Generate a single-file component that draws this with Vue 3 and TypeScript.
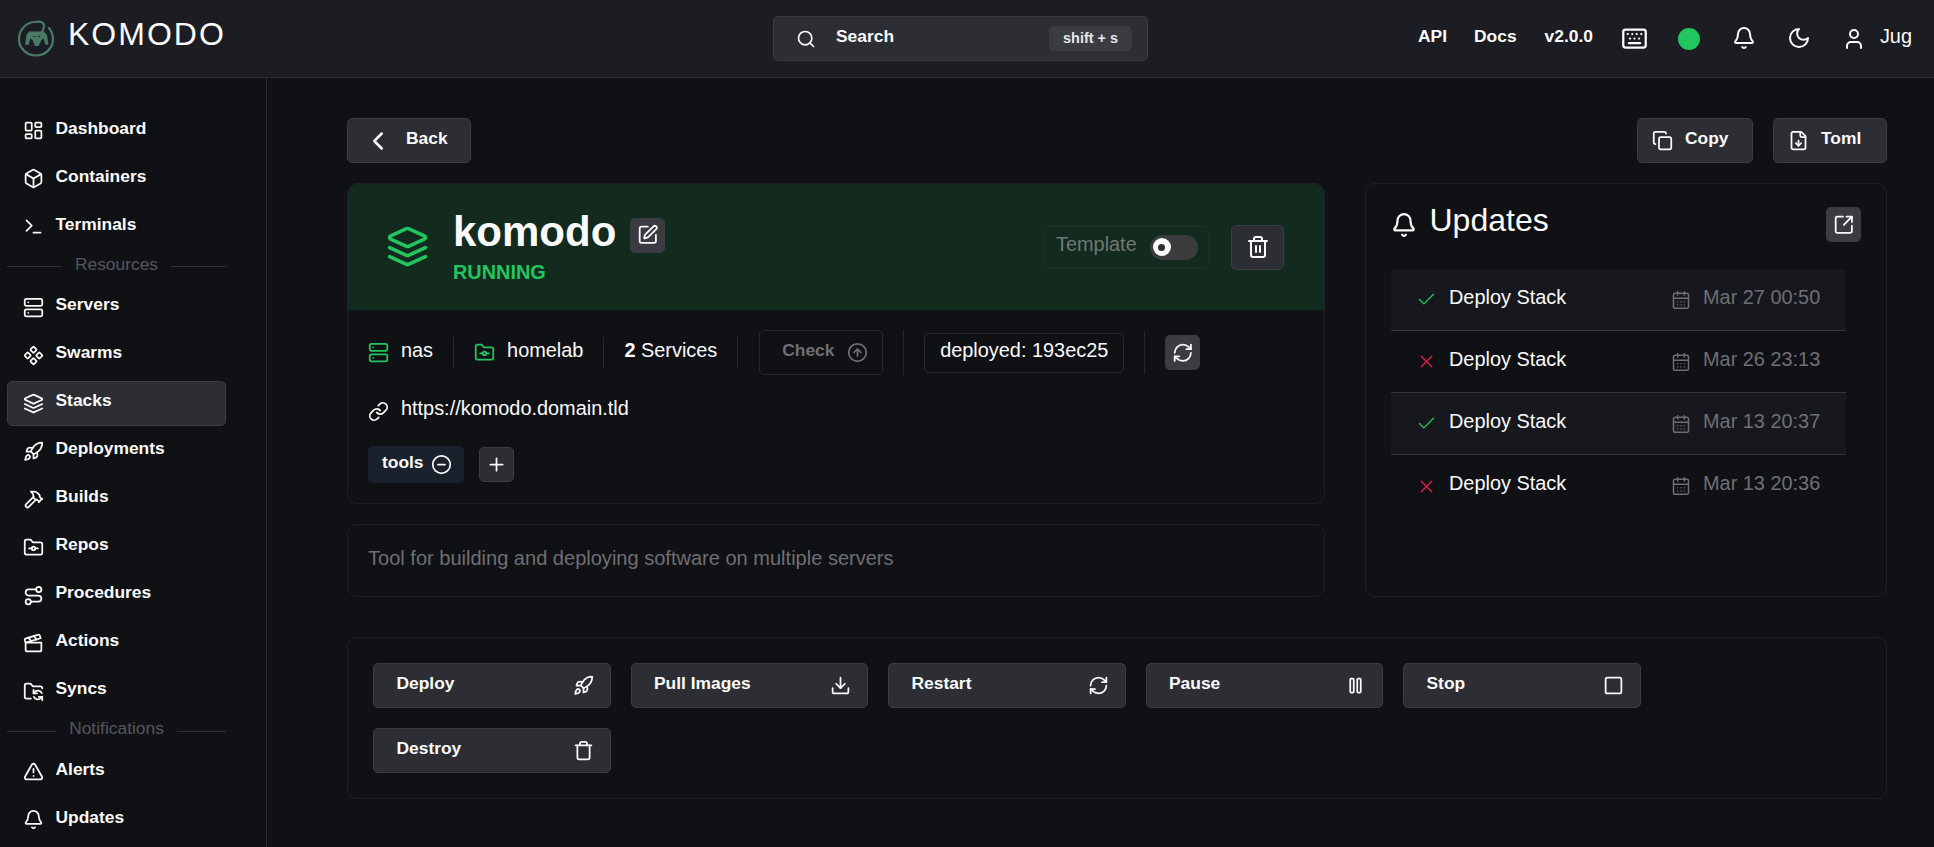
<script setup lang="ts">
const icons: Record<string, string> = {
  dashboard: '<rect x="3" y="3" width="7" height="9" rx="1"/><rect x="14" y="3" width="7" height="5" rx="1"/><rect x="14" y="12" width="7" height="9" rx="1"/><rect x="3" y="16" width="7" height="5" rx="1"/>',
  box: '<path d="M21 8a2 2 0 0 0-1-1.73l-7-4a2 2 0 0 0-2 0l-7 4A2 2 0 0 0 3 8v8a2 2 0 0 0 1 1.73l7 4a2 2 0 0 0 2 0l7-4A2 2 0 0 0 21 16Z"/><path d="m3.3 7 8.7 5 8.7-5"/><path d="M12 22V12"/>',
  terminal: '<polyline points="4 17 10 11 4 5"/><line x1="12" x2="20" y1="19" y2="19"/>',
  server: '<rect width="20" height="8" x="2" y="2" rx="2"/><rect width="20" height="8" x="2" y="14" rx="2"/><line x1="6" x2="6.01" y1="6" y2="6"/><line x1="6" x2="6.01" y1="18" y2="18"/>',
  swarm: '<path d="M15.536 11.293a1 1 0 0 0 0 1.414l2.376 2.377a1 1 0 0 0 1.414 0l2.377-2.377a1 1 0 0 0 0-1.414l-2.377-2.377a1 1 0 0 0-1.414 0z"/><path d="M2.297 11.293a1 1 0 0 0 0 1.414l2.377 2.377a1 1 0 0 0 1.414 0l2.377-2.377a1 1 0 0 0 0-1.414L6.088 8.916a1 1 0 0 0-1.414 0z"/><path d="M8.916 17.912a1 1 0 0 0 0 1.415l2.377 2.376a1 1 0 0 0 1.414 0l2.377-2.376a1 1 0 0 0 0-1.415l-2.377-2.376a1 1 0 0 0-1.414 0z"/><path d="M8.916 4.674a1 1 0 0 0 0 1.414l2.377 2.376a1 1 0 0 0 1.414 0l2.377-2.376a1 1 0 0 0 0-1.414l-2.377-2.377a1 1 0 0 0-1.414 0z"/>',
  layers: '<path d="m12.83 2.18a2 2 0 0 0-1.66 0L2.6 6.08a1 1 0 0 0 0 1.83l8.58 3.91a2 2 0 0 0 1.66 0l8.58-3.9a1 1 0 0 0 0-1.83Z"/><path d="m22 17.65-9.17 4.16a2 2 0 0 1-1.66 0L2 17.65"/><path d="m22 12.65-9.17 4.16a2 2 0 0 1-1.66 0L2 12.65"/>',
  rocket: '<path d="M4.5 16.5c-1.5 1.26-2 5-2 5s3.74-.5 5-2c.71-.84.7-2.13-.09-2.91a2.18 2.18 0 0 0-2.91-.09z"/><path d="m12 15-3-3a22 22 0 0 1 2-3.95A12.88 12.88 0 0 1 22 2c0 2.72-.78 7.5-6 11a22.35 22.35 0 0 1-4 2z"/><path d="M9 12H4s.55-3.03 2-4c1.62-1.08 5 0 5 0"/><path d="M12 15v5s3.03-.55 4-2c1.08-1.62 0-5 0-5"/>',
  hammer: '<path d="m15 12-8.373 8.373a1 1 0 1 1-3-3L12 9"/><path d="m18 15 4-4"/><path d="m21.5 11.5-1.914-1.914A2 2 0 0 1 19 8.172V7l-2.26-2.26a6 6 0 0 0-4.202-1.756L9 2.96l.92.82A6.18 6.18 0 0 1 12 8.4V10l2 2h1.172a2 2 0 0 1 1.414.586L18.5 14.5"/>',
  folderGit: '<path d="M20 20a2 2 0 0 0 2-2V8a2 2 0 0 0-2-2h-7.9a2 2 0 0 1-1.69-.9L9.6 3.9A2 2 0 0 0 7.93 3H4a2 2 0 0 0-2 2v13a2 2 0 0 0 2 2Z"/><circle cx="12" cy="13" r="2"/><path d="M14 13h3"/><path d="M7 13h3"/>',
  route: '<circle cx="6" cy="19" r="3"/><path d="M9 19h8.5a3.5 3.5 0 0 0 0-7h-11a3.5 3.5 0 0 1 0-7H15"/><circle cx="18" cy="5" r="3"/>',
  clapper: '<path d="M20.2 6 3 11l-.9-2.4c-.3-1.1.3-2.2 1.3-2.5l13.5-4c1.1-.3 2.2.3 2.5 1.3Z"/><path d="m6.2 5.3 3.1 3.9"/><path d="m12.4 3.4 3.1 4"/><path d="M3 11h18v8a2 2 0 0 1-2 2H5a2 2 0 0 1-2-2Z"/>',
  folderSync: '<path d="M9 20H4a2 2 0 0 1-2-2V5a2 2 0 0 1 2-2h3.9a2 2 0 0 1 1.69.9l.81 1.2a2 2 0 0 0 1.67.9H20a2 2 0 0 1 2 2v.5"/><path d="M12 10v4h4"/><path d="m12 14 1.535-1.605a5 5 0 0 1 8 1.5"/><path d="M22 22v-4h-4"/><path d="m22 18-1.535 1.605a5 5 0 0 1-8-1.5"/>',
  alert: '<path d="m21.73 18-8-14a2 2 0 0 0-3.48 0l-8 14A2 2 0 0 0 4 21h16a2 2 0 0 0 1.73-3"/><path d="M12 9v4"/><path d="M12 17h.01"/>',
  bell: '<path d="M10.268 21a2 2 0 0 0 3.464 0"/><path d="M3.262 15.326A1 1 0 0 0 4 17h16a1 1 0 0 0 .74-1.673C19.41 13.956 18 12.499 18 8A6 6 0 0 0 6 8c0 4.499-1.411 5.956-2.738 7.326"/>',
  search: '<circle cx="11" cy="11" r="8"/><path d="m21 21-4.3-4.3"/>',
  keyboard: '<path d="M10 8h.01"/><path d="M12 12h.01"/><path d="M14 8h.01"/><path d="M16 12h.01"/><path d="M18 8h.01"/><path d="M6 8h.01"/><path d="M7 16h10"/><path d="M8 12h.01"/><rect width="20" height="16" x="2" y="4" rx="2"/>',
  moon: '<path d="M12 3a6 6 0 0 0 9 9 9 9 0 1 1-9-9Z"/>',
  user: '<path d="M19 21v-2a4 4 0 0 0-4-4H9a4 4 0 0 0-4 4v2"/><circle cx="12" cy="7" r="4"/>',
  chevron: '<path d="m15 18-6-6 6-6"/>',
  copy: '<rect width="14" height="14" x="8" y="8" rx="2"/><path d="M4 16c-1.1 0-2-.9-2-2V4c0-1.1.9-2 2-2h10c1.1 0 2 .9 2 2"/>',
  fileDown: '<path d="M15 2H6a2 2 0 0 0-2 2v16a2 2 0 0 0 2 2h12a2 2 0 0 0 2-2V7Z"/><path d="M14 2v4a2 2 0 0 0 2 2h4"/><path d="M12 18v-6"/><path d="m9 15 3 3 3-3"/>',
  pen: '<path d="M12 3H5a2 2 0 0 0-2 2v14a2 2 0 0 0 2 2h14a2 2 0 0 0 2-2v-7"/><path d="M18.375 2.625a1 1 0 0 1 3 3l-9.013 9.014a2 2 0 0 1-.853.505l-2.873.84a.5.5 0 0 1-.62-.62l.84-2.873a2 2 0 0 1 .506-.852z"/>',
  trash2: '<path d="M3 6h18"/><path d="M19 6v14c0 1-1 2-2 2H7c-1 0-2-1-2-2V6"/><path d="M8 6V4c0-1 1-2 2-2h4c1 0 2 1 2 2v2"/><line x1="10" x2="10" y1="11" y2="17"/><line x1="14" x2="14" y1="11" y2="17"/>',
  trash: '<path d="M3 6h18"/><path d="M19 6v14c0 1-1 2-2 2H7c-1 0-2-1-2-2V6"/><path d="M8 6V4c0-1 1-2 2-2h4c1 0 2 1 2 2v2"/>',
  arrowUp: '<circle cx="12" cy="12" r="10"/><path d="m16 12-4-4-4 4"/><path d="M12 16V8"/>',
  refresh: '<path d="M3 12a9 9 0 0 1 9-9 9.75 9.75 0 0 1 6.74 2.74L21 8"/><path d="M21 3v5h-5"/><path d="M21 12a9 9 0 0 1-9 9 9.75 9.75 0 0 1-6.74-2.74L3 16"/><path d="M8 16H3v5"/>',
  link: '<path d="M10 13a5 5 0 0 0 7.54.54l3-3a5 5 0 0 0-7.07-7.07l-1.72 1.71"/><path d="M14 11a5 5 0 0 0-7.54-.54l-3 3a5 5 0 0 0 7.07 7.07l1.71-1.71"/>',
  minus: '<circle cx="12" cy="12" r="10"/><path d="M8 12h8"/>',
  plus: '<path d="M5 12h14"/><path d="M12 5v14"/>',
  external: '<path d="M21 13v6a2 2 0 0 1-2 2H5a2 2 0 0 1-2-2V5a2 2 0 0 1 2-2h6"/><path d="m21 3-9 9"/><path d="M15 3h6v6"/>',
  check: '<path d="M20 6 9 17l-5-5"/>',
  x: '<path d="M18 6 6 18"/><path d="m6 6 12 12"/>',
  calendar: '<path d="M8 2v4"/><path d="M16 2v4"/><rect width="18" height="18" x="3" y="4" rx="2"/><path d="M3 10h18"/><path d="M8 14h.01"/><path d="M12 14h.01"/><path d="M16 14h.01"/><path d="M8 18h.01"/><path d="M12 18h.01"/><path d="M16 18h.01"/>',
  download: '<path d="M21 15v4a2 2 0 0 1-2 2H5a2 2 0 0 1-2-2v-4"/><polyline points="7 10 12 15 17 10"/><line x1="12" x2="12" y1="15" y2="3"/>',
  pause: '<rect x="14" y="4" width="4" height="16" rx="1"/><rect x="6" y="4" width="4" height="16" rx="1"/>',
  square: '<rect width="18" height="18" x="3" y="3" rx="2"/>',
}

type NavEntry = { label: string; icon?: string; active?: boolean; divider?: boolean }
const nav: NavEntry[] = [
  { label: 'Dashboard', icon: 'dashboard' },
  { label: 'Containers', icon: 'box' },
  { label: 'Terminals', icon: 'terminal' },
  { label: 'Resources', divider: true },
  { label: 'Servers', icon: 'server' },
  { label: 'Swarms', icon: 'swarm' },
  { label: 'Stacks', icon: 'layers', active: true },
  { label: 'Deployments', icon: 'rocket' },
  { label: 'Builds', icon: 'hammer' },
  { label: 'Repos', icon: 'folderGit' },
  { label: 'Procedures', icon: 'route' },
  { label: 'Actions', icon: 'clapper' },
  { label: 'Syncs', icon: 'folderSync' },
  { label: 'Notifications', divider: true },
  { label: 'Alerts', icon: 'alert' },
  { label: 'Updates', icon: 'bell' },
]

const updates = [
  { ok: true, date: 'Mar 27 00:50' },
  { ok: false, date: 'Mar 26 23:13' },
  { ok: true, date: 'Mar 13 20:37' },
  { ok: false, date: 'Mar 13 20:36' },
]

const actions = [
  { label: 'Deploy', icon: 'rocket' },
  { label: 'Pull Images', icon: 'download' },
  { label: 'Restart', icon: 'refresh' },
  { label: 'Pause', icon: 'pause' },
  { label: 'Stop', icon: 'square' },
  { label: 'Destroy', icon: 'trash' },
]
</script>

<template>
  <div class="app">
    <header class="topbar">
      <div class="brand">
        <svg class="logo" viewBox="0 0 36 37" fill="none">
          <path d="M31 8C33.5 11 35 14.5 35 19C35 28 27.5 35.5 18 35.5C8.5 35.5 1 28 1 19C1 9.5 8.5 2 17 2C20 1.5 25 1 26 5C26.5 7.5 25 10 24 12" stroke="#4a7a66" stroke-width="2.2" stroke-linecap="round" />
          <path d="M11 11.5L26 11.5L29 15L30.5 25L27.5 24.5L25.5 18.5L23.5 20L20.5 26L17 26L14.5 20L12.5 18.5L10.5 25L7 24.5L8.5 15Z" fill="#4a7a66" />
          <path d="M15.5 16.5h2M20 16.5h2" stroke="#1b1d22" stroke-width="0.9" />
        </svg>
        <span class="brand-name">KOMODO</span>
      </div>
      <div class="search">
        <svg class="ic ic-search" viewBox="0 0 24 24" v-html="icons.search" />
        <span class="search-text lift">Search</span>
        <span class="kbd">shift + s</span>
      </div>
      <div class="top-right">
        <span class="top-link lift">API</span>
        <span class="top-link lift">Docs</span>
        <span class="top-link lift">v2.0.0</span>
        <svg class="ic ic-top kb" viewBox="0 0 24 24" v-html="icons.keyboard" />
        <span class="status-dot"></span>
        <svg class="ic ic-top bell" viewBox="0 0 24 24" v-html="icons.bell" />
        <svg class="ic ic-top moon" viewBox="0 0 24 24" v-html="icons.moon" />
        <span class="user">
          <svg class="ic ic-top" viewBox="0 0 24 24" v-html="icons.user" />
          <span class="user-name lift">Jug</span>
        </span>
      </div>
    </header>

    <div class="body">
      <aside class="sidebar">
        <template v-for="item in nav" :key="item.label">
          <div v-if="item.divider" class="nav-sep">
            <span class="sep-line"></span>
            <span class="sep-label">{{ item.label }}</span>
            <span class="sep-line"></span>
          </div>
          <div v-else class="nav-item" :class="{ active: item.active }">
            <svg class="ic ic-nav" viewBox="0 0 24 24" v-html="icons[item.icon as string]" />
            <span class="lift">{{ item.label }}</span>
          </div>
        </template>
      </aside>

      <main class="content">
        <div class="toolbar">
          <button class="btn btn-back">
            <svg class="ic ic-back" viewBox="0 0 24 24" v-html="icons.chevron" />
            <span class="lift">Back</span>
          </button>
          <div class="toolbar-right">
            <button class="btn btn-copy">
              <svg class="ic ic-nav" viewBox="0 0 24 24" v-html="icons.copy" />
              <span class="lift">Copy</span>
            </button>
            <button class="btn btn-toml">
              <svg class="ic ic-nav" viewBox="0 0 24 24" v-html="icons.fileDown" />
              <span class="lift">Toml</span>
            </button>
          </div>
        </div>

        <div class="columns">
          <div class="col-left">
            <section class="card stack-card">
              <div class="stack-head">
                <svg class="ic ic-stack" viewBox="0 0 24 24" v-html="icons.layers" />
                <div class="titles">
                  <div class="title-row">
                    <h1 class="title">komodo</h1>
                    <span class="sq-btn">
                      <svg class="ic ic-sm" viewBox="0 0 24 24" v-html="icons.pen" />
                    </span>
                  </div>
                  <div class="state">RUNNING</div>
                </div>
                <div class="head-actions">
                  <div class="template-box">
                    <span class="template-text lift">Template</span>
                    <span class="toggle"><span class="knob"><span class="knob-dot"></span></span></span>
                  </div>
                  <button class="btn btn-trash">
                    <svg class="ic ic-trash" viewBox="0 0 24 24" v-html="icons.trash2" />
                  </button>
                </div>
              </div>
              <div class="stack-body">
                <div class="info-row">
                  <span class="info"><svg class="ic ic-nav green" viewBox="0 0 24 24" v-html="icons.server" /><span class="lift">nas</span></span>
                  <span class="vline"></span>
                  <span class="info"><svg class="ic ic-nav green" viewBox="0 0 24 24" v-html="icons.folderGit" /><span class="lift">homelab</span></span>
                  <span class="vline"></span>
                  <span class="info lift"><span><b>2</b> Services</span></span>
                  <span class="vline"></span>
                  <span class="check-box">
                    <span class="lift">Check</span>
                    <svg class="ic ic-nav" viewBox="0 0 24 24" v-html="icons.arrowUp" />
                  </span>
                  <span class="vline tall"></span>
                  <span class="deployed-box"><span class="lift">deployed: 193ec25</span></span>
                  <span class="vline mid"></span>
                  <span class="sq-btn">
                    <svg class="ic ic-sm" viewBox="0 0 24 24" v-html="icons.refresh" />
                  </span>
                </div>
                <div class="info link-row"><svg class="ic ic-nav" viewBox="0 0 24 24" v-html="icons.link" /><span class="lift">https://komodo.domain.tld</span></div>
                <div class="tags-row">
                  <span class="tag"><span class="lift">tools</span><svg class="ic ic-nav" viewBox="0 0 24 24" v-html="icons.minus" /></span>
                  <span class="add-tag"><svg class="ic ic-nav" viewBox="0 0 24 24" v-html="icons.plus" /></span>
                </div>
              </div>
            </section>
            <section class="card desc-card"><span class="lift">Tool for building and deploying software on multiple servers</span></section>
          </div>

          <section class="card updates-card">
            <div class="updates-head">
              <svg class="ic ic-bell" viewBox="0 0 24 24" v-html="icons.bell" />
              <h2 class="updates-title">Updates</h2>
              <span class="sq-btn">
                <svg class="ic ic-sm" viewBox="0 0 24 24" v-html="icons.external" />
              </span>
            </div>
            <div class="update-list">
              <div v-for="(u, i) in updates" :key="i" class="update-row" :class="{ shaded: i % 2 === 0 }">
                <svg class="ic ic-status" :class="u.ok ? 'green' : 'red'" viewBox="0 0 24 24" v-html="u.ok ? icons.check : icons.x" />
                <span class="update-name lift">Deploy Stack</span>
                <svg class="ic ic-cal" viewBox="0 0 24 24" v-html="icons.calendar" />
                <span class="update-date lift">{{ u.date }}</span>
              </div>
            </div>
          </section>
        </div>

        <section class="card actions-card">
          <button v-for="a in actions" :key="a.label" class="btn action-btn">
            <span class="lift">{{ a.label }}</span>
            <svg class="ic ic-nav" viewBox="0 0 24 24" v-html="icons[a.icon]" />
          </button>
        </section>
      </main>
    </div>
  </div>
</template>

<style>
html, body { margin: 0; background: #101115; overflow: hidden; }
</style>

<style scoped>
.app {
  width: 1934px;
  height: 847px;
  overflow: hidden;
  background: #101115;
  color: #fafafa;
  font-family: "Liberation Sans", Arial, sans-serif;
  font-size: 19.9px;
  display: flex;
  flex-direction: column;
}
.ic {
  fill: none;
  stroke: currentColor;
  stroke-width: 2;
  stroke-linecap: round;
  stroke-linejoin: round;
  flex: none;
  display: block;
}
.lift { padding-bottom: 5px; }
.green { color: #22c55e; }
.red { color: #e11d48; }

.topbar {
  height: 78px;
  flex: none;
  box-sizing: border-box;
  border-bottom: 1px solid #2a2c31;
  background: #1b1d22;
  display: grid;
  grid-template-columns: 773px 375px 1fr;
  align-items: center;
}
.brand { display: flex; align-items: center; padding-left: 18px; }
.logo { width: 36px; height: 37px; }
.brand-name {
  margin-left: 14px;
  font-size: 32px;
  letter-spacing: 2px;
  color: #fafafa;
  padding-bottom: 8px;
}
.search {
  height: 45px;
  box-sizing: border-box;
  border: 1px solid #3b3d43;
  border-radius: 5px;
  background: #2c2e33;
  display: flex;
  align-items: center;
  padding: 0 15px 0 22px;
  font-size: 17.4px;
  font-weight: 700;
}
.ic-search { width: 20px; height: 20px; }
.search-text { margin-left: 20px; flex: 1; }
.kbd {
  width: 83px;
  height: 25px;
  box-sizing: border-box;
  border-radius: 5px;
  background: #3a3c42;
  display: flex;
  align-items: center;
  justify-content: center;
  font-size: 14.4px;
  color: #e8e8e8;
  padding-bottom: 2px;
}
.top-right {
  display: flex;
  align-items: center;
  justify-content: flex-end;
  padding-right: 22px;
  font-size: 17.4px;
  font-weight: 700;
}
.top-link { margin-right: 28px; }
.top-link:first-child { margin-right: 27px; }
.ic-top { width: 24px; height: 24px; }
.kb { width: 27px; height: 27px; }
.status-dot {
  width: 22px;
  height: 22px;
  border-radius: 50%;
  background: #22c55e;
  margin-left: 30.5px;
}
.bell { margin-left: 32px; margin-bottom: 1px; }
.moon { margin-left: 31px; margin-bottom: 1px; }
.user { display: flex; align-items: center; margin-left: 30.5px; }
.user-name { margin-left: 14px; font-size: 19.9px; font-weight: 400; }

.body { flex: 1; display: flex; min-height: 0; }
.sidebar {
  width: 267px;
  flex: none;
  box-sizing: border-box;
  border-right: 1px solid #2a2c31;
  padding: 30px 40px 0 7px;
  display: flex;
  flex-direction: column;
  gap: 3px;
  overflow: hidden;
}
.nav-item {
  height: 45px;
  flex: none;
  box-sizing: border-box;
  border: 1px solid transparent;
  border-radius: 5px;
  display: flex;
  align-items: center;
  gap: 11.5px;
  padding-left: 15px;
  font-size: 17.4px;
  font-weight: 700;
}
.nav-item.active { background: #2c2e33; border-color: #3b3d43; }
.ic-nav { width: 21px; height: 21px; }
.nav-sep {
  height: 29.5px;
  flex: none;
  display: flex;
  align-items: center;
  gap: 13px;
  color: #55575c;
  font-size: 17.4px;
}
.sep-line { flex: 1; height: 1px; background: #2f3136; }
.sep-label { padding-bottom: 5px; }

.content {
  flex: 1;
  min-width: 0;
  box-sizing: border-box;
  padding: 40px 47px 0 80px;
  display: flex;
  flex-direction: column;
}
.btn {
  height: 45px;
  box-sizing: border-box;
  border: 1px solid #3b3d43;
  border-radius: 5px;
  background: #2c2e33;
  color: #fafafa;
  font: 700 17.4px "Liberation Sans", Arial, sans-serif;
  display: flex;
  align-items: center;
  padding: 0;
}
.toolbar { display: flex; justify-content: space-between; margin-bottom: 20px; }
.toolbar-right { display: flex; gap: 20px; }
.btn-back { width: 124px; padding-left: 15px; gap: 13px; }
.ic-back { width: 30px; height: 30px; }
.btn-copy { width: 116px; padding-left: 14px; gap: 12px; }
.btn-toml { width: 114px; padding-left: 14px; gap: 12px; }
.columns { display: grid; grid-template-columns: 978px 522px; gap: 40px; margin-bottom: 40px; }
.col-left { display: flex; flex-direction: column; gap: 20px; }
.card {
  box-sizing: border-box;
  border: 1px solid #1e2025;
  border-radius: 10px;
  background: #101115;
}
.stack-card { height: 321px; overflow: hidden; }
.stack-head {
  height: 126px;
  box-sizing: border-box;
  background: #132a1f;
  display: flex;
  align-items: center;
  padding: 0 40px 0 38px;
}
.ic-stack { width: 43px; height: 43px; color: #22c55e; margin-bottom: 2px; }
.titles { margin-left: 24px; display: flex; flex-direction: column; }
.title-row { display: flex; align-items: center; gap: 14px; height: 56px; }
.title { margin: 0; font-size: 42px; line-height: 50px; font-weight: 700; padding-bottom: 7px; }
.state { color: #22c55e; font-weight: 700; font-size: 19.9px; line-height: 24px; margin-top: -3px; margin-bottom: 3px; }
.sq-btn {
  width: 35px;
  height: 35px;
  flex: none;
  border-radius: 5px;
  background: #3a3c42;
  display: flex;
  align-items: center;
  justify-content: center;
}
.ic-sm { width: 21.6px; height: 21.6px; }
.ic-trash { width: 24px; height: 24px; }
.head-actions { margin-left: auto; display: flex; align-items: center; gap: 21px; }
.template-box {
  width: 167px;
  height: 42px;
  box-sizing: border-box;
  border: 1px solid #1c3327;
  border-radius: 5px;
  display: flex;
  align-items: center;
  padding-left: 12px;
  gap: 13px;
  color: #6f7873;
}
.toggle {
  width: 48px;
  height: 25px;
  border-radius: 13px;
  background: #3a3c3e;
  display: flex;
  align-items: center;
  padding-left: 3px;
  box-sizing: border-box;
}
.knob {
  width: 18px;
  height: 18px;
  border-radius: 50%;
  background: #fafafa;
  display: flex;
  align-items: center;
  justify-content: center;
}
.knob-dot { width: 7px; height: 7px; border-radius: 50%; background: #2c2e33; }
.btn-trash { width: 53px; justify-content: center; }

.stack-body { padding: 20px 20px; display: flex; flex-direction: column; gap: 25px; }
.info-row { display: flex; align-items: center; gap: 20px; height: 45px; }
.info { display: flex; align-items: center; gap: 12px; }
.vline { width: 1px; height: 31px; background: #26282c; flex: none; }
.vline.tall { height: 45px; }
.vline.mid { height: 43px; }
.check-box {
  width: 124px;
  height: 45px;
  box-sizing: border-box;
  border: 1px solid #26282c;
  border-radius: 5px;
  display: flex;
  align-items: center;
  padding-left: 22px;
  gap: 13px;
  color: #6e6f73;
  font-size: 17.4px;
  font-weight: 700;
  margin-left: 1px;
}
.deployed-box {
  width: 200px;
  height: 40px;
  box-sizing: border-box;
  border: 1px solid #26282c;
  border-radius: 5px;
  display: flex;
  align-items: center;
  justify-content: center;
}
.link-row { height: 22px; }
.tags-row { display: flex; align-items: center; gap: 15px; margin-top: -1px; }
.tag {
  width: 96px;
  height: 37px;
  box-sizing: border-box;
  border-radius: 5px;
  background: #1a202c;
  display: flex;
  align-items: center;
  padding-left: 14px;
  gap: 7px;
  font-size: 17.4px;
  font-weight: 700;
}
.add-tag {
  width: 35px;
  height: 35px;
  box-sizing: border-box;
  border: 1px solid #3b3d43;
  border-radius: 5px;
  background: #2c2e33;
  display: flex;
  align-items: center;
  justify-content: center;
}
.desc-card {
  height: 73px;
  display: flex;
  align-items: center;
  padding-left: 20px;
  color: #6e6f73;
  font-size: 20.05px;
}
.updates-card { padding: 23px 25px 0 25px; }
.updates-head { display: flex; align-items: center; height: 35px; }
.ic-bell { width: 26px; height: 26px; }
.updates-title { margin: 0 0 0 12.5px; font-size: 32px; font-weight: 400; flex: 1; line-height: 40px; padding-bottom: 10px; }
.update-list { margin-top: 27px; margin-right: 15px; }
.update-row {
  height: 62px;
  box-sizing: border-box;
  display: flex;
  align-items: center;
  padding-left: 25px;
  border-bottom: 1px solid #33353a;
}
.update-row:last-child { border-bottom: 0; }
.update-row.shaded { background: #16181d; }
.ic-status { width: 21px; height: 21px; stroke-width: 1.6; }
.update-name { margin-left: 12px; flex: 1; }
.ic-cal { width: 20px; height: 20px; color: #6e6f73; stroke-width: 1.8; }
.update-date { margin-left: 12px; width: 143px; color: #6e6f73; }

.actions-card {
  height: 162px;
  padding: 25px 25px;
  display: flex;
  flex-wrap: wrap;
  gap: 20px;
  align-content: flex-start;
}
.action-btn {
  width: 237.5px;
  justify-content: space-between;
  padding: 0 16px 0 22.5px;
}
</style>
